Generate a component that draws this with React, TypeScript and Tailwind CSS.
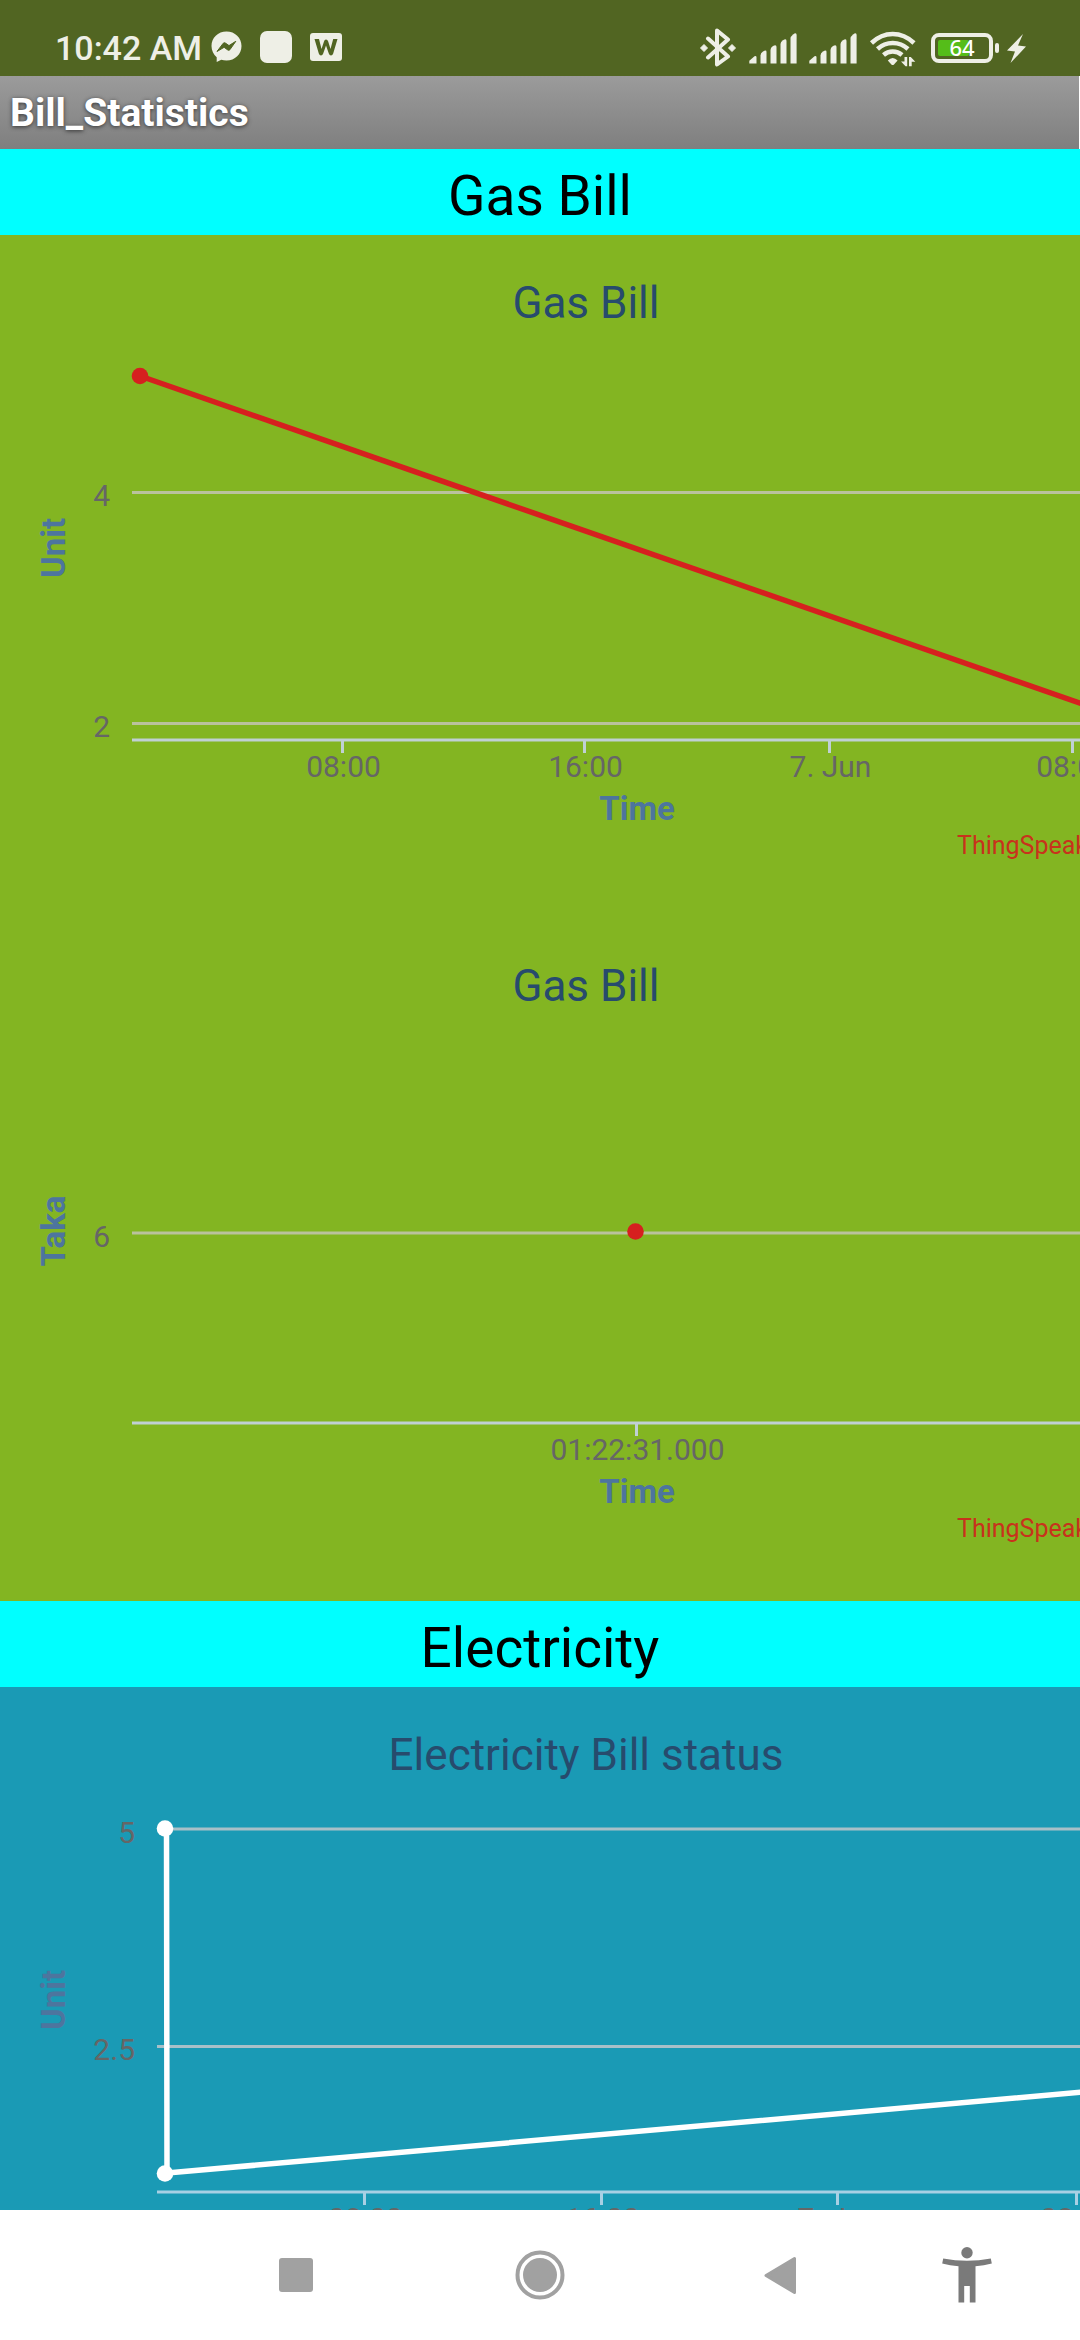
import React from "react";

type Tick = { x: number; label: string };
type GridLine = { y: number; label: string };
type Point = [number, number];

type ChartProps = {
  title: string;
  yTitle: string;
  plotLeft: number;
  labelRight: number;
  grid: GridLine[];
  ticks: Tick[];
  line?: Point[];
  dots: Point[];
  color: string;
  gridColor: string;
  axisColor: string;
  titleColor: string;
};

const CHART_WIDTH = 1172;
const CHART_HEIGHT = 683;
const AXIS_Y = 505;

function Chart(p: ChartProps) {
  return (
    <svg
      role="img"
      aria-label={`${p.title} chart`}
      width={CHART_WIDTH}
      height={CHART_HEIGHT}
      viewBox={`0 0 ${CHART_WIDTH} ${CHART_HEIGHT}`}
      className="block max-w-none shrink-0"
    >
      <text x={586} y={83} textAnchor="middle" fontSize={44} fill={p.titleColor}>
        {p.title}
      </text>
      {p.grid.map((g) => (
        <g key={g.label}>
          <line x1={p.plotLeft} x2={CHART_WIDTH} y1={g.y} y2={g.y} stroke={p.gridColor} strokeWidth={3} />
          <text x={p.labelRight} y={Math.floor(g.y) + 14} textAnchor="end" fontSize={30} fill="#666666">
            {g.label}
          </text>
        </g>
      ))}
      <line x1={p.plotLeft} x2={CHART_WIDTH} y1={AXIS_Y} y2={AXIS_Y} stroke={p.axisColor} strokeWidth={3} />
      {p.ticks.map((t) => (
        <g key={t.x}>
          <line x1={t.x} x2={t.x} y1={AXIS_Y} y2={AXIS_Y + 13} stroke={p.axisColor} strokeWidth={3} />
          <text x={t.x + 1} y={AXIS_Y + 37} textAnchor="middle" fontSize={30} fill="#666666">
            {t.label}
          </text>
        </g>
      ))}
      <text
        x={0}
        y={0}
        transform="translate(65 313) rotate(-90)"
        textAnchor="middle"
        fontSize={33}
        fontWeight={700}
        fill="#4d759e"
      >
        {p.yTitle}
      </text>
      <text x={637} y={585} textAnchor="middle" fontSize={33} fontWeight={700} fill="#4d759e">
        Time
      </text>
      <text x={957} y={619} fontSize={25} fill="#c8321c">
        ThingSpeak.com
      </text>
      {p.line && (
        <polyline
          points={p.line.map((q) => q.join(",")).join(" ")}
          fill="none"
          stroke={p.color}
          strokeWidth={5.5}
          strokeLinejoin="round"
        />
      )}
      {p.dots.map(([x, y]) => (
        <circle key={`${x}-${y}`} cx={x} cy={y} r={8.3} fill={p.color} />
      ))}
    </svg>
  );
}

function SectionHeading({ children }: { children: React.ReactNode }) {
  return (
    <h2 className="flex h-[86px] shrink-0 items-center justify-center bg-[#00ffff] pt-2 text-[55px] leading-none font-normal text-black">
      {children}
    </h2>
  );
}

function Signal() {
  return (
    <svg width="48" height="40" viewBox="748 26 48 40" fill="#eeefe6" aria-hidden="true">
      <path d="M748.300 62.500V59.800L753.500 55.300Q755.500 54.500 755.500 56.500V62.500Z" />
      <path d="M759.500 62.500V54.500Q759.500 52 762 50.500Q765.500 48.500 765.500 51V62.500Z" />
      <path d="M769.500 62.500V49Q769.500 46.500 772 45Q775.500 43 775.500 46V62.500Z" />
      <path d="M779.500 62.500V43Q779.500 41 782 39.300Q785.500 37 785.500 40V62.500Z" />
      <path d="M789.500 62.500V37.500Q789.500 35.500 792 33.500Q795.600 31 795.600 34V62.500Z" />
    </svg>
  );
}

function StatusBar() {
  return (
    <header className="flex h-[76px] shrink-0 items-end justify-between bg-[#516522] pr-[51px] pb-[9px] pl-[55px] text-[#eeefe6]">
      <div className="flex h-10 items-center gap-[18px]">
        <div className="flex items-center gap-[9px]">
          <time className="pt-0.5 text-[34px] leading-none font-medium">10:42 AM</time>
          <svg width="31" height="32" viewBox="0 0 31 32" aria-label="Messenger">
            <path
              d="M15.500 0.500C7 0.500 0.500 6.700 0.500 15c0 4.700 2 8.500 5.200 11.200V31l4.600-2.200c1.600.5 3.300.7 5.200.7C24 29.500 30.500 23.300 30.500 15S24 .5 15.500.5Z"
              fill="#eeefe6"
            />
            <path
              d="M6 20.500L12.200 12.300Q13.200 11.200 14.400 12.100L18 14.600L24.800 10.300L18.900 18.700Q17.900 19.800 16.700 18.900L13.100 16.300Z"
              fill="#516522"
              stroke="#516522"
              strokeLinejoin="round"
            />
          </svg>
        </div>
        <span className="h-8 w-8 rounded-[7px] bg-[#eeefe6]" />
        <svg width="32" height="28" viewBox="0 0 32 28" aria-label="W">
          <rect width="32" height="28" rx="3" fill="#eeefe6" />
          <path
            d="M4.500 6H9L11.500 16L14 8.500Q14.500 6.500 16 6.500T18.200 8.500L20.500 16L23.200 6H27.500L23.200 20.500Q22.500 22.500 21 22.500T18.800 20.500L16 12.500L13.200 20.500Q12.500 22.500 11 22.500T8.800 20.500Z"
            fill="#516522"
          />
        </svg>
      </div>
      <div className="flex h-10 items-center gap-3">
        <svg width="40" height="40" viewBox="696 26 40 40" aria-label="Bluetooth">
          <path
            d="M707 38L727 56L716 64V30L727 39L707 57"
            transform="translate(0 -0.500)"
            fill="none"
            stroke="#eeefe6"
            strokeWidth="4"
            strokeLinecap="round"
            strokeLinejoin="round"
          />
          <path
            d="M703 43.500L706.500 47L703 50.500L699.500 47ZM731 43.500L734.500 47L731 50.500L727.500 47Z"
            fill="#eeefe6"
            stroke="#eeefe6"
            strokeLinejoin="round"
          />
        </svg>
        <Signal />
        <Signal />
        <svg width="48" height="40" viewBox="868 26 48 40" aria-label="Wi-Fi">
          <g fill="none" stroke="#eeefe6" strokeWidth="4.500">
            <path d="M870.500 42Q880 33 891.700 33Q903.500 33 913 42" />
            <path d="M876.500 48Q883 42 891.700 42Q900.500 42 907 48" />
            <path d="M882.500 54Q886.500 50.500 891.700 50.500Q897 50.500 901 54" />
          </g>
          <path d="M886.800 59.500Q891.700 54.500 896.600 59.500L893 63.400Q891.700 64.500 890.400 63.400Z" fill="#eeefe6" />
          <path d="M900 60.500H903.500V56H906.200V65.300H904.500ZM908 56H909.800L914.300 60.800H910.700V65.300H908Z" fill="#eeefe6" />
        </svg>
        <svg width="100" height="40" viewBox="928 26 100 40" aria-label="Battery 64 percent, charging">
          <rect x="932" y="34" width="58" height="26" rx="6" fill="none" stroke="#eeefe6" strokeWidth="4" />
          <rect x="937" y="39" width="31" height="16" rx="2" fill="#55bd19" />
          <rect x="994" y="42" width="4" height="10" rx="2" fill="#eeefe6" />
          <text
            x="961"
            y="55"
            textAnchor="middle"
            fontSize="22"
            fontWeight="500"
            fill="#ffffff"
            className="font-['Noto_Sans',sans-serif]"
          >
            64
          </text>
          <path d="M1022 33L1006 49.500L1014 50.500L1009.500 62L1025 45.500L1017 44.500Z" fill="#eeefe6" />
        </svg>
      </div>
    </header>
  );
}

function NavBar() {
  return (
    <nav className="grid h-[130px] shrink-0 grid-cols-[174fr_244fr_244fr_244fr_122fr_52fr] bg-white">
      <button type="button" aria-label="Recent apps" className="col-start-2 flex items-center justify-center">
        <span className="h-[34px] w-[34px] rounded-[3px] bg-[#a1a1a1]" />
      </button>
      <button type="button" aria-label="Home" className="flex items-center justify-center">
        <svg width="50" height="50" viewBox="0 0 50 50" fill="#a1a1a1">
          <circle cx="25" cy="25" r="22.500" fill="none" stroke="#a1a1a1" strokeWidth="4" />
          <circle cx="25" cy="25" r="17" />
        </svg>
      </button>
      <button type="button" aria-label="Back" className="flex items-center justify-center">
        <svg
          width="40"
          height="40"
          viewBox="764 2255 40 40"
          fill="#a1a1a1"
          stroke="#a1a1a1"
          strokeWidth="3"
          strokeLinejoin="round"
        >
          <path d="M766 2275.500L794.500 2258.500V2292.500Z" />
        </svg>
      </button>
      <button type="button" aria-label="Accessibility" className="flex items-center justify-center">
        <svg width="50" height="56" viewBox="0 0 50 56" fill="#7a7a7a">
          <circle cx="25" cy="5.700" r="5.700" />
          <path d="M1.200 11.500Q25 16 48.800 11.500L49.800 16.500Q42 18.700 33.500 19.200V55.500H27.800V39H22.200V55.500H16.500V19.200Q8 18.700 0.200 16.500Z" />
        </svg>
      </button>
    </nav>
  );
}

export default function App() {
  return (
    <div className="flex h-screen flex-col overflow-hidden bg-white font-['Roboto',sans-serif]">
      <StatusBar />
      <div className="mr-px flex h-[73px] shrink-0 items-center bg-linear-to-b from-[#9b9b9b] to-[#7f7f7f] px-[10px] pt-0.5">
        <h1 className="text-[39px] leading-none font-bold text-white [text-shadow:0_1px_4px_#333333]">Bill_Statistics</h1>
      </div>
      <main className="flex min-h-0 flex-1 flex-col overflow-x-hidden overflow-y-auto [scrollbar-width:none]">
        <SectionHeading>Gas Bill</SectionHeading>
        <section className="shrink-0 overflow-hidden bg-[#83b522]">
          <Chart
            title="Gas Bill"
            yTitle="Unit"
            plotLeft={132}
            labelRight={110}
            grid={[
              { y: 257.5, label: "4" },
              { y: 488.5, label: "2" },
            ]}
            ticks={[
              { x: 342.5, label: "08:00" },
              { x: 584.5, label: "16:00" },
              { x: 829.5, label: "7. Jun" },
              { x: 1072.5, label: "08:00" },
            ]}
            line={[
              [140, 141],
              [1140, 489],
            ]}
            dots={[[140, 141]]}
            color="#d6201f"
            gridColor="#bac29e"
            axisColor="#c0d0d4"
            titleColor="#274b6d"
          />
          <Chart
            title="Gas Bill"
            yTitle="Taka"
            plotLeft={132}
            labelRight={110}
            grid={[{ y: 315, label: "6" }]}
            ticks={[{ x: 636.5, label: "01:22:31.000" }]}
            dots={[[635.5, 313.5]]}
            color="#d6201f"
            gridColor="#bac29e"
            axisColor="#c0d0d4"
            titleColor="#274b6d"
          />
        </section>
        <SectionHeading>Electricity</SectionHeading>
        <section className="shrink-0 overflow-hidden bg-[#1a9ab5]">
          <Chart
            title="Electricity Bill status"
            yTitle="Unit"
            plotLeft={157}
            labelRight={135}
            grid={[
              { y: 142, label: "5" },
              { y: 359.5, label: "2.5" },
            ]}
            ticks={[
              { x: 364.5, label: "08:00" },
              { x: 601.5, label: "16:00" },
              { x: 837.5, label: "7. Jun" },
              { x: 1076.5, label: "08:00" },
            ]}
            line={[
              [166.5, 141.5],
              [167, 486],
              [1140, 400],
            ]}
            dots={[
              [165, 141.5],
              [165, 486.5],
            ]}
            color="#ffffff"
            gridColor="#a8c0c8"
            axisColor="#a8d0e4"
            titleColor="#274b6d"
          />
        </section>
      </main>
      <NavBar />
    </div>
  );
}
